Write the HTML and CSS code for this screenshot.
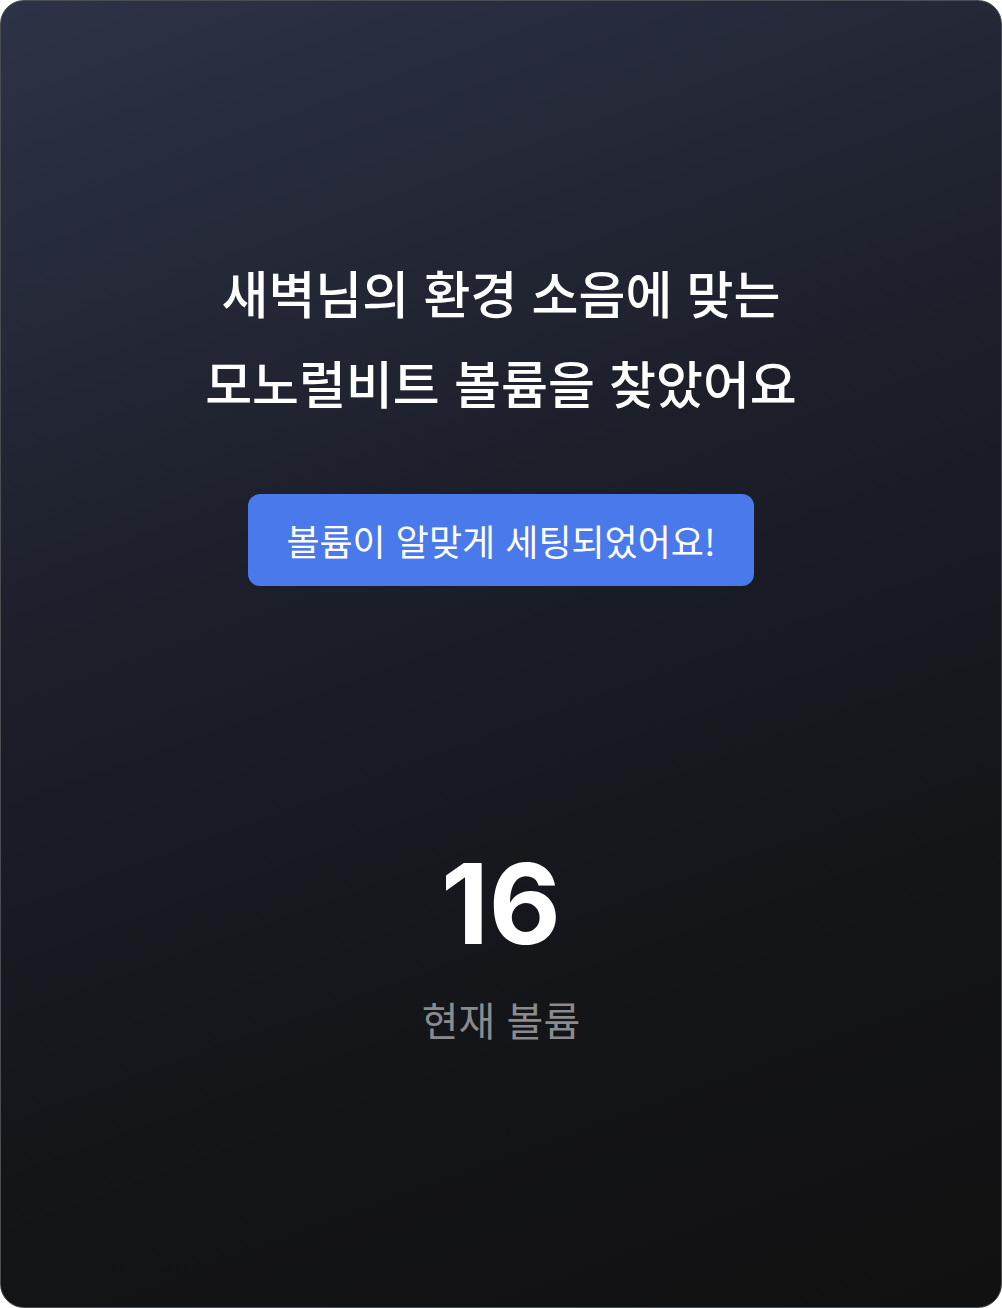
FILE: index.html
```html
<!DOCTYPE html>
<html lang="ko">
<head>
<meta charset="utf-8">
<link rel="stylesheet" href="styles.css">
</head>
<body>
<main class="card">
  <h1 class="title">새벽님의 환경 소음에 맞는<br>모노럴비트 볼륨을 찾았어요</h1>
  <div class="badge">볼륨이 알맞게 세팅되었어요!</div>
  <div class="volume">
    <div class="volume-value">16</div>
    <div class="volume-label">현재 볼륨</div>
  </div>
</main>
</body>
</html>
```
FILE: styles.css
```css
html, body {
  margin: 0;
  padding: 0;
  background: #ffffff;
}
body {
  font-family: "Noto Sans CJK KR", "Noto Sans", sans-serif;
}
.card {
  box-sizing: border-box;
  width: 1002px;
  height: 1308px;
  border-radius: 24px;
  border: 1px solid #4a4d52;
  background: linear-gradient(160deg, #2d3346 0%, #1c1f2a 40%, #131417 75%, #111111 100%);
  display: flex;
  flex-direction: column;
  align-items: center;
  padding-top: 246px;
  color: #ffffff;
}
.title {
  margin: 0;
  font-size: 51px;
  font-weight: 500;
  line-height: 90px;
  text-align: center;
}
.badge {
  margin-top: 67px;
  width: 506px;
  height: 92px;
  box-sizing: border-box;
  border-radius: 12px;
  background: #4a79ec;
  display: flex;
  align-items: center;
  justify-content: center;
  font-size: 36px;
  font-weight: 400;
}
.volume {
  margin-top: 258px;
  display: flex;
  flex-direction: column;
  align-items: center;
}
.volume-value {
  font-family: Inter, "Noto Sans", sans-serif;
  font-size: 111px;
  font-weight: 700;
  line-height: 120px;
}
.volume-label {
  margin-top: 31px;
  font-size: 40px;
  line-height: 48px;
  color: #8b8b8d;
}
```
